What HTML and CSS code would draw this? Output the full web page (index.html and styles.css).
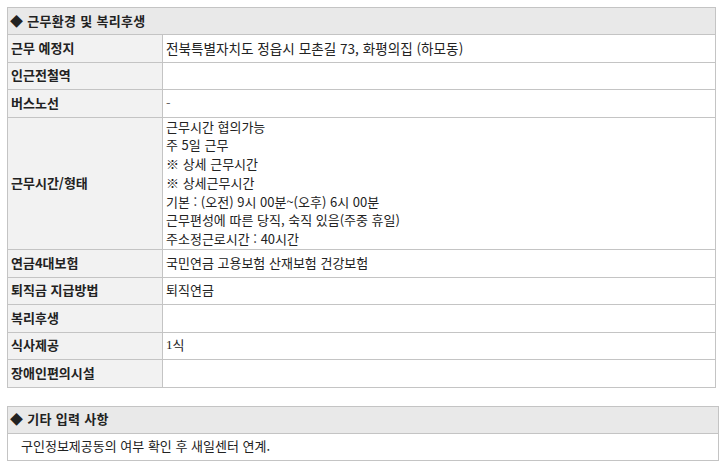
FILE: index.html
```html
<!DOCTYPE html>
<html lang="ko">
<head>
<meta charset="utf-8">
<link rel="stylesheet" href="styles.css">
</head>
<body>
<section class="box box-main">
  <div class="box-head">◆ 근무환경 및 복리후생</div>
  <div class="row"><div class="label">근무 예정지</div><div class="value addr">전북특별자치도 정읍시 모촌길 73, 화평의집 (하모동)</div></div>
  <div class="row"><div class="label">인근전철역</div><div class="value"></div></div>
  <div class="row"><div class="label">버스노선</div><div class="value dash">-</div></div>
  <div class="row"><div class="label">근무시간/형태</div><div class="value multi">근무시간 협의가능<br>주 5일 근무<br>※ 상세 근무시간<br>※ 상세근무시간<br>기본 : (오전) 9시 00분~(오후) 6시 00분<br>근무편성에 따른 당직, 숙직 있음(주중 휴일)<br>주소정근로시간 : 40시간</div></div>
  <div class="row"><div class="label">연금4대보험</div><div class="value">국민연금 고용보험 산재보험 건강보험</div></div>
  <div class="row"><div class="label">퇴직금 지급방법</div><div class="value">퇴직연금</div></div>
  <div class="row"><div class="label">복리후생</div><div class="value"></div></div>
  <div class="row"><div class="label">식사제공</div><div class="value"><span class="serif">1</span>식</div></div>
  <div class="row"><div class="label">장애인편의시설</div><div class="value"></div></div>
</section>
<section class="box box-etc">
  <div class="box-head">◆ 기타 입력 사항</div>
  <div class="etc-body">구인정보제공동의 여부 확인 후 새일센터 연계.</div>
</section>
</body>
</html>
```

FILE: styles.css
```css
html, body {
  margin: 0;
  padding: 0;
  background: #ffffff;
}
body {
  padding: 7px 0 0 7px;
  font-family: "Noto Sans CJK KR", "Noto Sans", sans-serif;
  font-size: 13px;
  line-height: 18.8px;
  color: #222222;
}
.box {
  border: 1px solid #c4c4c4;
  box-sizing: border-box;
}
.box-main {
  width: 709px;
}
.box-etc {
  width: 712px;
  margin-top: 18px;
}
.box-head {
  background: #e9e9e9;
  height: 26px;
  display: flex;
  align-items: center;
  padding-left: 2px;
  font-weight: bold;
  letter-spacing: 0.3px;
  border-bottom: 1px solid #c4c4c4;
}
.row {
  display: grid;
  grid-template-columns: 155px 1fr;
  border-bottom: 1px solid #c4c4c4;
}
.row:last-child {
  border-bottom: none;
}
.label {
  background: #f2f2f2;
  border-right: 1px solid #c4c4c4;
  font-weight: bold;
  padding: 0 3px;
  min-height: 26.5px;
  display: flex;
  align-items: center;
}
.value {
  padding: 0 3px;
  min-height: 26.5px;
  display: flex;
  align-items: center;
}
.value.addr {
  font-size: 13.6px;
}
.value.multi {
  display: block;
}
.dash {
  color: #666666;
}
.serif {
  font-family: "Liberation Serif", serif;
}
.etc-body {
  height: 26px;
  display: flex;
  align-items: center;
  padding-left: 13px;
}
```
